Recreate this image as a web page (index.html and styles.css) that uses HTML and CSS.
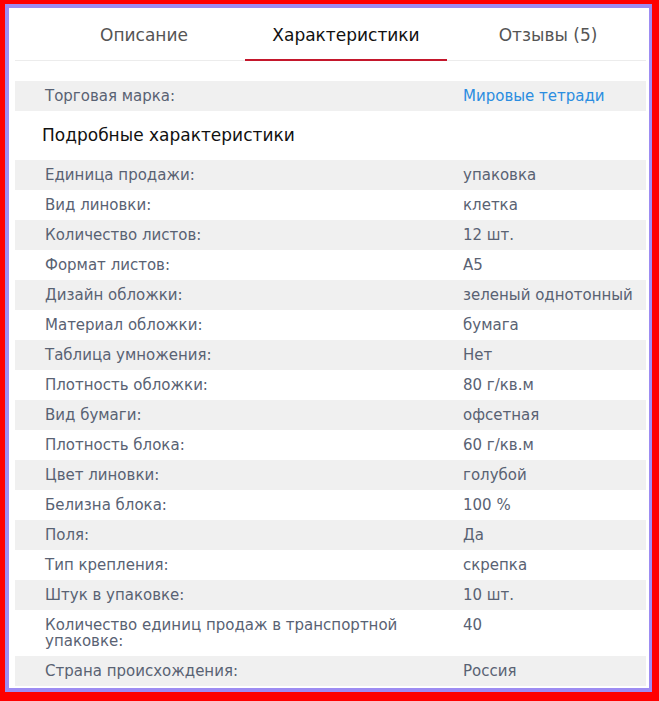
FILE: index.html
```html
<!DOCTYPE html>
<html lang="ru">
<head>
<meta charset="utf-8">
<title>Характеристики</title>
<link rel="stylesheet" href="styles.css">
</head>
<body>
<div class="frame">
  <div class="inner">
    <nav class="tabs">
      <a class="tab">Описание</a>
      <a class="tab active">Характеристики</a>
      <a class="tab">Отзывы (5)</a>
    </nav>
    <div class="props">
      <div class="row grey"><div class="label">Торговая марка:</div><div class="value link">Мировые тетради</div></div>
    </div>
    <h3 class="heading">Подробные характеристики</h3>
    <div class="props">
      <div class="row grey"><div class="label">Единица продажи:</div><div class="value">упаковка</div></div>
      <div class="row"><div class="label">Вид линовки:</div><div class="value">клетка</div></div>
      <div class="row grey"><div class="label">Количество листов:</div><div class="value">12 шт.</div></div>
      <div class="row"><div class="label">Формат листов:</div><div class="value">А5</div></div>
      <div class="row grey"><div class="label">Дизайн обложки:</div><div class="value">зеленый однотонный</div></div>
      <div class="row"><div class="label">Материал обложки:</div><div class="value">бумага</div></div>
      <div class="row grey"><div class="label">Таблица умножения:</div><div class="value">Нет</div></div>
      <div class="row"><div class="label">Плотность обложки:</div><div class="value">80 г/кв.м</div></div>
      <div class="row grey"><div class="label">Вид бумаги:</div><div class="value">офсетная</div></div>
      <div class="row"><div class="label">Плотность блока:</div><div class="value">60 г/кв.м</div></div>
      <div class="row grey"><div class="label">Цвет линовки:</div><div class="value">голубой</div></div>
      <div class="row"><div class="label">Белизна блока:</div><div class="value">100 %</div></div>
      <div class="row grey"><div class="label">Поля:</div><div class="value">Да</div></div>
      <div class="row"><div class="label">Тип крепления:</div><div class="value">скрепка</div></div>
      <div class="row grey"><div class="label">Штук в упаковке:</div><div class="value">10 шт.</div></div>
      <div class="row"><div class="label">Количество единиц продаж в транспортной упаковке:</div><div class="value">40</div></div>
      <div class="row grey"><div class="label">Страна происхождения:</div><div class="value">Россия</div></div>
    </div>
  </div>
</div>
</body>
</html>
```
FILE: styles.css
```css
html, body {
  margin: 0;
  padding: 0;
  background: #fff;
}
.frame {
  width: 659px;
  height: 701px;
  box-sizing: border-box;
  border-style: solid;
  border-color: #ff0000;
  border-width: 4px 7px 9px 5px;
}
.inner {
  height: 100%;
  box-sizing: border-box;
  border-style: solid;
  border-color: #9d8cf2;
  border-width: 4px 3px 4px 4px;
  background: #fff;
  padding: 0 3px 0 6px;
  font-family: "DejaVu Sans", Verdana, sans-serif;
  overflow: hidden;
}
.tabs {
  display: flex;
  padding-left: 28px;
  border-bottom: 1px solid #ececec;
  height: 52px;
}
.tab {
  width: 202px;
  flex: none;
  text-align: center;
  font-size: 17px;
  line-height: 54px;
  color: #555;
  box-sizing: border-box;
  border-bottom: 2px solid transparent;
  height: 53px;
}
.tab.active {
  color: #111;
  border-bottom-color: #c4172c;
}
.props {
  font-size: 15px;
  color: #596273;
}
.tabs + .props {
  margin-top: 20px;
}
.row {
  display: grid;
  grid-template-columns: 418px 1fr;
  line-height: 16px;
  padding: 7px 0;
}
.row.grey {
  background: #f0f0f0;
}
.label {
  padding-left: 30px;
  padding-right: 30px;
}
.value {
  padding-left: 30px;
}
.link {
  color: #2b8de0;
}
.heading {
  margin: 0;
  height: 49px;
  line-height: 48px;
  padding-left: 27px;
  font-size: 17px;
  font-weight: normal;
  color: #111;
}
```
